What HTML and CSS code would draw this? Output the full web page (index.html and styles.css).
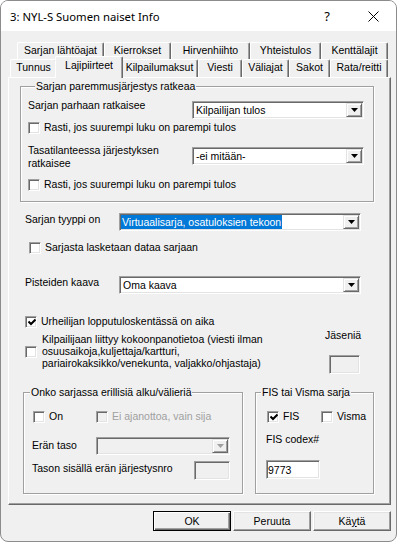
FILE: index.html
```html
<!DOCTYPE html>
<html>
<head>
<meta charset="utf-8">
<link rel="stylesheet" href="styles.css">
</head>
<body>
<div class="window">
  <div class="titlebar">
    <span class="title">3: NYL-S Suomen naiset Info</span>
    <span class="help">?</span>
    <span class="close"><svg width="11" height="11" viewBox="0 0 11 11"><path d="M0.5 0.5 L10.5 10.5 M10.5 0.5 L0.5 10.5" stroke="#000" stroke-width="1" fill="none"/></svg></span>
  </div>

  <div class="tabctl">
    <div class="tabrow back">
      <div class="tab w87">Sarjan lähtöajat</div>
      <div class="tab w67">Kierrokset</div>
      <div class="tab w79">Hirvenhiihto</div>
      <div class="tab w71">Yhteistulos</div>
      <div class="tab w67">Kenttälajit</div>
    </div>
    <div class="tabrow front">
      <div class="tab w47">Tunnus</div>
      <div class="tab sel">Lajipiirteet</div>
      <div class="tab w77">Kilpailumaksut</div>
      <div class="tab w44">Viesti</div>
      <div class="tab w47">Väliajat</div>
      <div class="tab w41">Sakot</div>
      <div class="tab w58">Rata/reitti</div>
    </div>

    <div class="panel">
      <div class="group g1">
        <div class="legend">Sarjan paremmusjärjestys ratkeaa</div>
        <div class="row rowA">
          <div class="lbl l164 up2">Sarjan parhaan ratkaisee</div>
          <div class="combo c172"><span class="ctext">Kilpailijan tulos</span><span class="dd"><svg width="7" height="4" viewBox="0 0 7 4"><path d="M0 0 H7 L3.5 4 Z" fill="#000"/></svg></span></div>
        </div>
        <div class="chk ck1"><span class="box"></span><span>Rasti, jos suurempi luku on parempi tulos</span></div>
        <div class="row rowB">
          <div class="lbl l164">Tasatilanteessa järjestyksen<br>ratkaisee</div>
          <div class="combo c172 down3"><span class="ctext">-ei mitään-</span><span class="dd"><svg width="7" height="4" viewBox="0 0 7 4"><path d="M0 0 H7 L3.5 4 Z" fill="#000"/></svg></span></div>
        </div>
        <div class="chk ck2"><span class="box"></span><span>Rasti, jos suurempi luku on parempi tulos</span></div>
      </div>

      <div class="row typ">
        <div class="lbl l94">Sarjan tyyppi on</div>
        <div class="combo c242"><span class="ctext hl">Virtuaalisarja, osatuloksien tekoon</span><span class="dd"><svg width="7" height="4" viewBox="0 0 7 4"><path d="M0 0 H7 L3.5 4 Z" fill="#000"/></svg></span></div>
      </div>
      <div class="chk ck3"><span class="box"></span><span>Sarjasta lasketaan dataa sarjaan</span></div>

      <div class="row pist">
        <div class="lbl l94">Pisteiden kaava</div>
        <div class="combo c242"><span class="ctext">Oma kaava</span><span class="dd"><svg width="7" height="4" viewBox="0 0 7 4"><path d="M0 0 H7 L3.5 4 Z" fill="#000"/></svg></span></div>
      </div>
      <div class="chk ck4"><span class="box"><svg width="8" height="8" viewBox="0 0 8 8"><path d="M0.5 3.5 L3 6 L7.5 1.5" stroke="#000" stroke-width="2" fill="none"/></svg></span><span>Urheilijan lopputuloskentässä on aika</span></div>

      <div class="row kok">
        <div class="kokleft">
          <span class="box boxk"></span>
          <span class="koktext">Kilpailijaan liittyy kokoonpanotietoa (viesti ilman<br>osuusaikoja,kuljettaja/kartturi,<br>pariairokaksikko/venekunta, valjakko/ohjastaja)</span>
        </div>
        <div class="jas">
          <div class="jaslbl">Jäseniä</div>
          <div class="edit dis e31"></div>
        </div>
      </div>

      <div class="row groups">
        <div class="group g2">
          <div class="legend lg2">Onko sarjassa erillisiä alku/välieriä</div>
          <div class="row gchk">
            <div class="chk w63"><span class="box"></span><span>On</span></div>
            <div class="chk disabled"><span class="box dbox"></span><span>Ei ajanottoa, vain sija</span></div>
          </div>
          <div class="row eran">
            <div class="lbl l64 dn2">Erän taso</div>
            <div class="combo dis c134"><span class="ctext"></span><span class="dd"><svg width="7" height="4" viewBox="0 0 7 4"><path d="M0 0 H7 L3.5 4 Z" fill="#a0a0a0"/></svg></span></div>
          </div>
          <div class="row tason">
            <div class="lbl l162 dn1">Tason sisällä erän järjestysnro</div>
            <div class="edit dis e36"></div>
          </div>
        </div>
        <div class="group g3">
          <div class="legend lg3">FIS tai Visma sarja</div>
          <div class="row fchk">
            <div class="chk w54"><span class="box"><svg width="8" height="8" viewBox="0 0 8 8"><path d="M0.5 3.5 L3 6 L7.5 1.5" stroke="#000" stroke-width="2" fill="none"/></svg></span><span>FIS</span></div>
            <div class="chk"><span class="box"></span><span>Visma</span></div>
          </div>
          <div class="codex">FIS codex#</div>
          <div class="edit e54">9773</div>
        </div>
      </div>
    </div>
  </div>

  <div class="buttons">
    <div class="btn def">OK</div>
    <div class="btn">Peruuta</div>
    <div class="btn">Kä<u>y</u>tä</div>
  </div>
</div>
</body>
</html>
```

FILE: styles.css
```css
* { box-sizing: border-box; }
html, body { margin: 0; padding: 0; background: #fff; }
body { width: 397px; height: 542px; overflow: hidden; }

.window {
  width: 397px;
  height: 542px;
  border: 1px solid #8c8c8c;
  border-radius: 8px;
  background: #f0f0f0;
  overflow: hidden;
  font-family: "Liberation Sans", Arial, sans-serif;
  font-size: 10.5px;
  line-height: 13px;
  color: #000;
}

.titlebar {
  height: 30px;
  background: #fff;
  display: flex;
  align-items: center;
  padding-left: 9px;
  font-family: "Noto Sans", sans-serif;
  font-size: 11.3px;
}
.title { flex: 1; }
.help { width: 46px; text-align: center; font-size: 13px; }
.close { width: 46px; display: flex; justify-content: center; align-items: center; }

/* tabs */
.tabctl { margin: 11px 0 0 7px; width: 383px; }
.tabrow { display: flex; }
.tabrow.back { padding-left: 9px; height: 17px; }
.tabrow.front { padding-left: 2px; height: 18px; }
.tab {
  border-top: 1px solid #fff;
  border-left: 1px solid #fff;
  border-right: 1px solid #696969;
  box-shadow: inset -1px 0 0 #a0a0a0;
  border-radius: 2px 2px 0 0;
  text-align: center;
  white-space: nowrap;
  line-height: 15px;
}
.tab.sel {
  width: 68px;
  height: 22px;
  margin: -3px -2px -1px -2px;
  position: relative;
  z-index: 1;
  background: #f0f0f0;
  line-height: 16px;
}
.w87 { width: 87px; } .w67 { width: 67px; } .w79 { width: 79px; } .w71 { width: 71px; }
.w47 { width: 47px; } .w77 { width: 77px; } .w44 { width: 44px; } .w41 { width: 41px; } .w58 { width: 58px; }

.panel {
  width: 383px;
  height: 428px;
  border-top: 1px solid #fff;
  border-left: 1px solid #fff;
  border-right: 1px solid #696969;
  border-bottom: 1px solid #696969;
  box-shadow: inset -1px -1px 0 #a0a0a0;
}

/* group boxes */
.group {
  border: 1px solid #a0a0a0;
  box-shadow: inset 1px 1px 0 #fff, 1px 1px 0 #fff;
}
.legend {
  width: fit-content;
  margin: -7px 0 0 7px;
  padding: 0 1px;
  background: #f0f0f0;
  white-space: nowrap;
}
.g1 { margin: 8px 0 0 11px; width: 354px; height: 116px; padding-left: 7px; }

.row { display: flex; align-items: flex-start; }
.lbl { white-space: nowrap; flex: none; }
.l164 { width: 164px; } .l94 { width: 94px; } .l64 { width: 64px; } .l162 { width: 162px; }
.up2 { margin-top: -2px; }
.dn2 { margin-top: 2px; }
.dn1 { margin-top: 1px; }
.down3 { margin-top: 3px; }

.rowA { margin-top: 8px; }
.ck1 { margin-top: 2px; }
.rowB { margin-top: 10px; }
.ck2 { margin-top: 8px; }

/* combo boxes */
.combo {
  height: 18px;
  display: flex;
  align-items: center;
  background: #fff;
  border: 1px solid;
  border-color: #a0a0a0 #fff #fff #a0a0a0;
  box-shadow: inset 1px 1px 0 #696969, inset -1px -1px 0 #e3e3e3;
  padding: 1px;
  flex: none;
}
.c172 { width: 172px; } .c242 { width: 242px; } .c134 { width: 134px; }
.ctext { flex: 1; padding-left: 2px; white-space: nowrap; line-height: 14px; height: 14px; }
.ctext.hl { flex: none; margin-right: auto; background: #0078d7; color: #fff; padding: 0 1px; }
.dd {
  width: 16px;
  height: 14px;
  flex: none;
  display: flex;
  align-items: center;
  justify-content: center;
  background: #f0f0f0;
  border: 1px solid;
  border-color: #e3e3e3 #696969 #696969 #e3e3e3;
  box-shadow: inset 1px 1px 0 #fff, inset -1px -1px 0 #a0a0a0;
  margin-left: auto;
}
.combo.dis { background: #f0f0f0; }

/* edit boxes */
.edit {
  height: 19px;
  background: #fff;
  border: 1px solid;
  border-color: #a0a0a0 #fff #fff #a0a0a0;
  box-shadow: inset 1px 1px 0 #696969, inset -1px -1px 0 #e3e3e3;
  padding: 2px 0 0 1px;
  flex: none;
  line-height: 14px;
}
.edit.dis { background: #f0f0f0; }
.e31 { width: 31px; } .e36 { width: 36px; } .e54 { width: 54px; }

/* check boxes */
.chk { display: flex; align-items: center; white-space: nowrap; }
.box {
  width: 12px;
  height: 12px;
  flex: none;
  margin-right: 4px;
  background: #fff;
  border: 1px solid;
  border-color: #a0a0a0 #fff #fff #a0a0a0;
  box-shadow: inset 1px 1px 0 #696969, inset -1px -1px 0 #e3e3e3;
  display: flex;
  align-items: center;
  justify-content: center;
}
.box svg { margin: 1px 0 0 1px; }
.dbox { background: #f0f0f0; }
.disabled { color: #a0a0a0; }
.w63 { width: 63px; } .w54 { width: 54px; }

.typ { margin: 11px 0 0 16px; }
.ck3 { margin: 10px 0 0 20px; }
.pist { margin: 22px 0 0 16px; }
.ck4 { margin: 21px 0 0 16px; }

.kok { margin: 1px 0 0 16px; }
.kokleft { width: 300px; display: flex; align-items: flex-start; }
.boxk { margin-top: 17px; margin-right: 5px; }
.koktext { padding-top: 4px; line-height: 12px; white-space: nowrap; }
.jas { flex: none; }
.jaslbl { line-height: 12px; }
.jas .edit { margin: 14px 0 0 4px; }

.groups { margin: 18px 0 0 14px; gap: 12px; }
.g2 { width: 220px; height: 102px; }
.g3 { width: 119px; height: 102px; }
.lg2 { margin-left: 6px; }
.lg3 { margin-left: 5px; }
.gchk { margin: 11px 0 0 9px; }
.eran { margin: 14px 0 0 8px; }
.tason { margin: 6px 0 0 8px; }
.fchk { margin: 11px 0 0 11px; }
.codex { margin: 10px 0 0 10px; }
.g3 .edit { margin: 14px 0 0 10px; }

/* buttons */
.buttons {
  display: flex;
  justify-content: flex-end;
  gap: 2px;
  padding-right: 5px;
  margin-top: 6px;
}
.btn {
  width: 78px;
  height: 20px;
  text-align: center;
  line-height: 18px;
  border: 1px solid;
  border-color: #fff #696969 #696969 #fff;
  box-shadow: inset -1px -1px 0 #a0a0a0, inset 1px 1px 0 #e3e3e3;
}
.btn.def {
  border-color: #000;
  box-shadow: inset 1px 1px 0 #fff, inset -1px -1px 0 #696969, inset -2px -2px 0 #a0a0a0;
}
```
